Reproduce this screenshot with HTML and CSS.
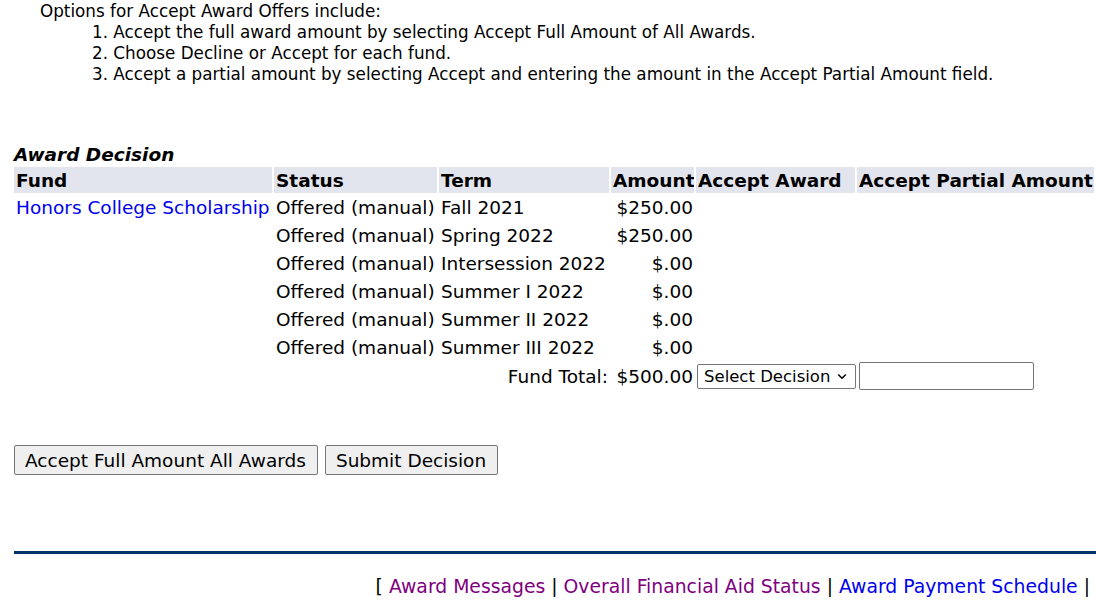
FILE: index.html
```html
<!DOCTYPE html>
<html>
<head>
<meta charset="utf-8">
<link rel="stylesheet" href="styles.css">
<title>Award Decision</title>
</head>
<body>
<div class="intro">
  <p class="intro-title">Options for Accept Award Offers include:</p>
  <ol class="intro-list">
    <li>Accept the full award amount by selecting Accept Full Amount of All Awards.</li>
    <li>Choose Decline or Accept for each fund.</li>
    <li>Accept a partial amount by selecting Accept and entering the amount in the Accept Partial Amount field.</li>
  </ol>
</div>

<form class="award-form">
  <table class="award-table">
    <caption>Award Decision</caption>
    <colgroup>
      <col class="c-fund">
      <col class="c-status">
      <col class="c-term">
      <col class="c-amount">
      <col class="c-accept">
      <col class="c-partial">
    </colgroup>
    <thead>
      <tr>
        <th>Fund</th>
        <th>Status</th>
        <th>Term</th>
        <th>Amount</th>
        <th>Accept Award</th>
        <th>Accept Partial Amount</th>
      </tr>
    </thead>
    <tbody>
      <tr class="first-row">
        <td><a class="fund-link" href="#">Honors College Scholarship</a></td>
        <td>Offered (manual)</td>
        <td>Fall 2021</td>
        <td class="num">$250.00</td>
        <td></td>
        <td></td>
      </tr>
      <tr>
        <td></td>
        <td>Offered (manual)</td>
        <td>Spring 2022</td>
        <td class="num">$250.00</td>
        <td></td>
        <td></td>
      </tr>
      <tr>
        <td></td>
        <td>Offered (manual)</td>
        <td>Intersession 2022</td>
        <td class="num">$.00</td>
        <td></td>
        <td></td>
      </tr>
      <tr>
        <td></td>
        <td>Offered (manual)</td>
        <td>Summer I 2022</td>
        <td class="num">$.00</td>
        <td></td>
        <td></td>
      </tr>
      <tr>
        <td></td>
        <td>Offered (manual)</td>
        <td>Summer II 2022</td>
        <td class="num">$.00</td>
        <td></td>
        <td></td>
      </tr>
      <tr>
        <td></td>
        <td>Offered (manual)</td>
        <td>Summer III 2022</td>
        <td class="num">$.00</td>
        <td></td>
        <td></td>
      </tr>
      <tr class="total-row">
        <td></td>
        <td></td>
        <td class="num">Fund Total:</td>
        <td class="num">$500.00</td>
        <td>
          <select class="decision">
            <option>Select Decision</option>
            <option>Accept</option>
            <option>Decline</option>
          </select>
        </td>
        <td><input class="partial" type="text"></td>
      </tr>
    </tbody>
  </table>

  <div class="actions">
    <button type="button" class="btn">Accept Full Amount All Awards</button>
    <button type="button" class="btn">Submit Decision</button>
  </div>
</form>

<hr class="divider">

<div class="footer-links">
  [ <a class="visited" href="#">Award Messages</a> | <a class="visited" href="#">Overall Financial Aid Status</a> | <a class="link" href="#">Award Payment Schedule</a> |
</div>
</body>
</html>
```
FILE: styles.css
```css
html, body {
  margin: 0;
  padding: 0;
  background: #ffffff;
}

body {
  font-family: "DejaVu Sans", Verdana, sans-serif;
  font-size: 18.5px;
  color: #000000;
  width: 1096px;
  overflow: hidden;
}

.intro {
  padding: 1px 0 0 40px;
  font-size: 16.8px;
  line-height: 21px;
}

.intro-title {
  margin: 0;
}

.intro-list {
  margin: 0;
  padding-left: 52px;
  list-style-position: inside;
}

.award-form {
  margin-top: 59px;
}

.award-table {
  margin-left: 12px;
  width: 1084px;
  table-layout: fixed;
  border-collapse: separate;
  border-spacing: 2px;
}

.award-table caption {
  text-align: left;
  font-weight: bold;
  font-style: italic;
  padding-left: 2px;
  line-height: 21px;
}

.c-fund { width: 258px; }
.c-status { width: 163px; }
.c-term { width: 170px; }
.c-amount { width: 83px; }
.c-accept { width: 159px; }
.c-partial { width: 237px; }

.award-table th {
  background: #e3e5ee;
  text-align: left;
  font-weight: bold;
  padding: 0 2px;
  height: 26px;
  white-space: nowrap;
  overflow: hidden;
}

.award-table td {
  padding: 0 2px;
  height: 26px;
  white-space: nowrap;
  vertical-align: middle;
}

.award-table .first-row td {
  height: 25px;
}

.award-table td.num {
  text-align: right;
  padding-right: 1px;
}

.fund-link {
  color: #0000ee;
  text-decoration: none;
}

.award-table .total-row td {
  height: 28px;
}

.decision {
  font-family: "DejaVu Sans", Verdana, sans-serif;
  font-size: 16.5px;
  height: 25px;
  width: 159px;
  box-sizing: border-box;
  border: 1px solid #767676;
  border-radius: 2px;
  color: #000000;
  padding: 0 20px 0 6px;
  margin-left: -1px;
  -webkit-appearance: none;
  appearance: none;
  background-color: #ffffff;
  background-image: url("data:image/svg+xml,%3Csvg xmlns='http://www.w3.org/2000/svg' width='10' height='7' viewBox='0 0 10 7'%3E%3Cpath d='M1.2 1.5 L5 5.2 L8.8 1.5' fill='none' stroke='%23000' stroke-width='1.6'/%3E%3C/svg%3E");
  background-repeat: no-repeat;
  background-position: right 8px center;
  line-height: 23px;
}

.partial {
  width: 175px;
  height: 28px;
  box-sizing: border-box;
  border: 1px solid #767676;
  border-radius: 2px;
  padding: 0 2px;
  margin: 0;
}

.actions {
  margin-top: 53px;
  margin-left: 14px;
  display: flex;
  gap: 7px;
}

.btn {
  font-family: "DejaVu Sans", Verdana, sans-serif;
  font-size: 18.5px;
  height: 30px;
  padding: 0 11px 0 10px;
  background: #efefef;
  border: 1px solid #767676;
  border-radius: 2px;
  color: #000000;
}

.divider {
  margin: 76px 0 0 14px;
  border: 0;
  height: 3px;
  background: #003366;
}

.footer-links {
  margin-top: 22px;
  text-align: right;
  padding-right: 6px;
  font-size: 18.8px;
  line-height: 21px;
  color: #000000;
}

.footer-links a {
  text-decoration: none;
}

.footer-links .visited {
  color: #800080;
}

.footer-links .link {
  color: #0000ee;
}
```
